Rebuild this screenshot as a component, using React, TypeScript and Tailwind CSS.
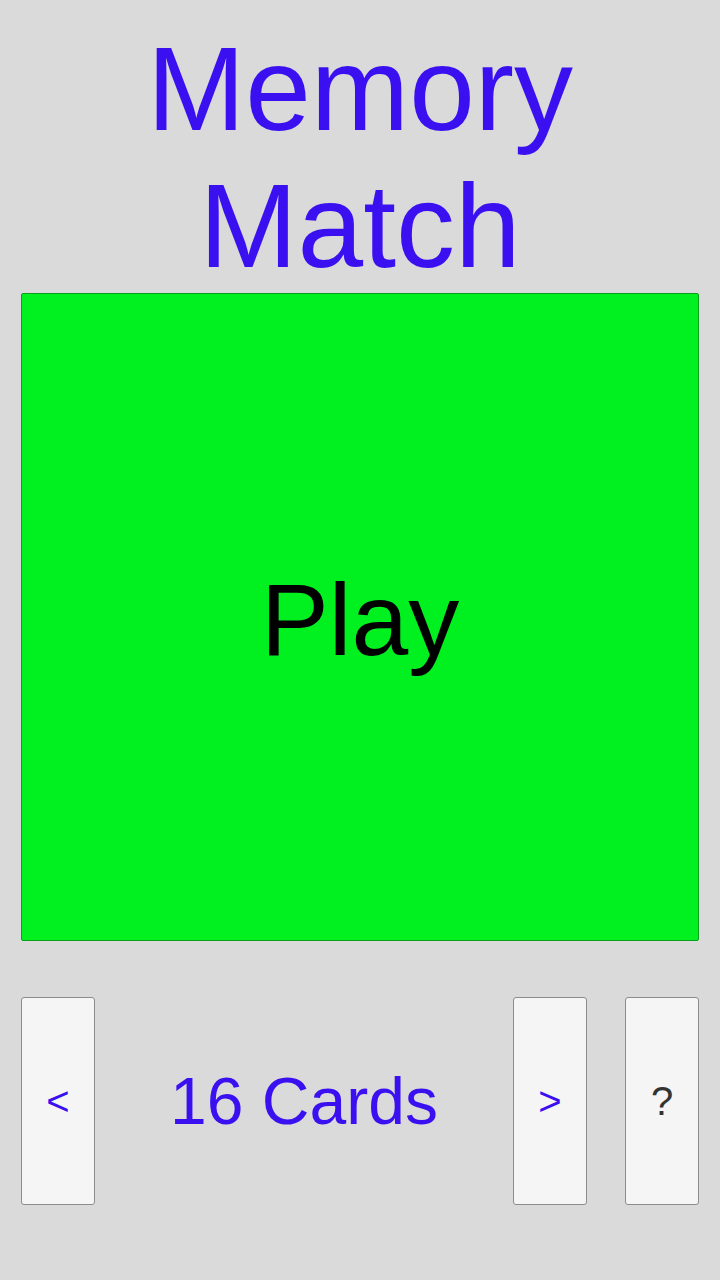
export default function App() {
  const font = { fontFamily: '"Liberation Sans", Arial, sans-serif' };
  return (
    <div
      className="w-[720px] h-[1280px] bg-[#dadada] flex flex-col px-[21px] pt-[21px]"
      style={font}
    >
      <h1 className="h-[272px] text-center text-[118px] leading-[137px] text-[#3a10f0] font-normal">
        Memory
        <br />
        Match
      </h1>

      <button className="h-[648px] w-full shrink-0 bg-[#00f020] border border-[#0aa01c] rounded-[2px] flex items-center justify-center pt-[6px] text-[102px] text-black">
        Play
      </button>

      <div className="mt-[56px] flex items-stretch h-[208px]">
        <button className="w-[74px] bg-[#f5f5f5] border border-[#8c8c8c] rounded-[3px] text-[40px] text-[#3a10f0] flex items-center justify-center">
          &lt;
        </button>
        <div className="flex-1 flex items-center justify-center text-[66px] text-[#3a10f0]">
          16 Cards
        </div>
        <button className="w-[74px] bg-[#f5f5f5] border border-[#8c8c8c] rounded-[3px] text-[40px] text-[#3a10f0] flex items-center justify-center">
          &gt;
        </button>
        <button className="ml-[38px] w-[74px] bg-[#f5f5f5] border border-[#8c8c8c] rounded-[3px] text-[40px] text-[#333333] flex items-center justify-center">
          ?
        </button>
      </div>
    </div>
  );
}
